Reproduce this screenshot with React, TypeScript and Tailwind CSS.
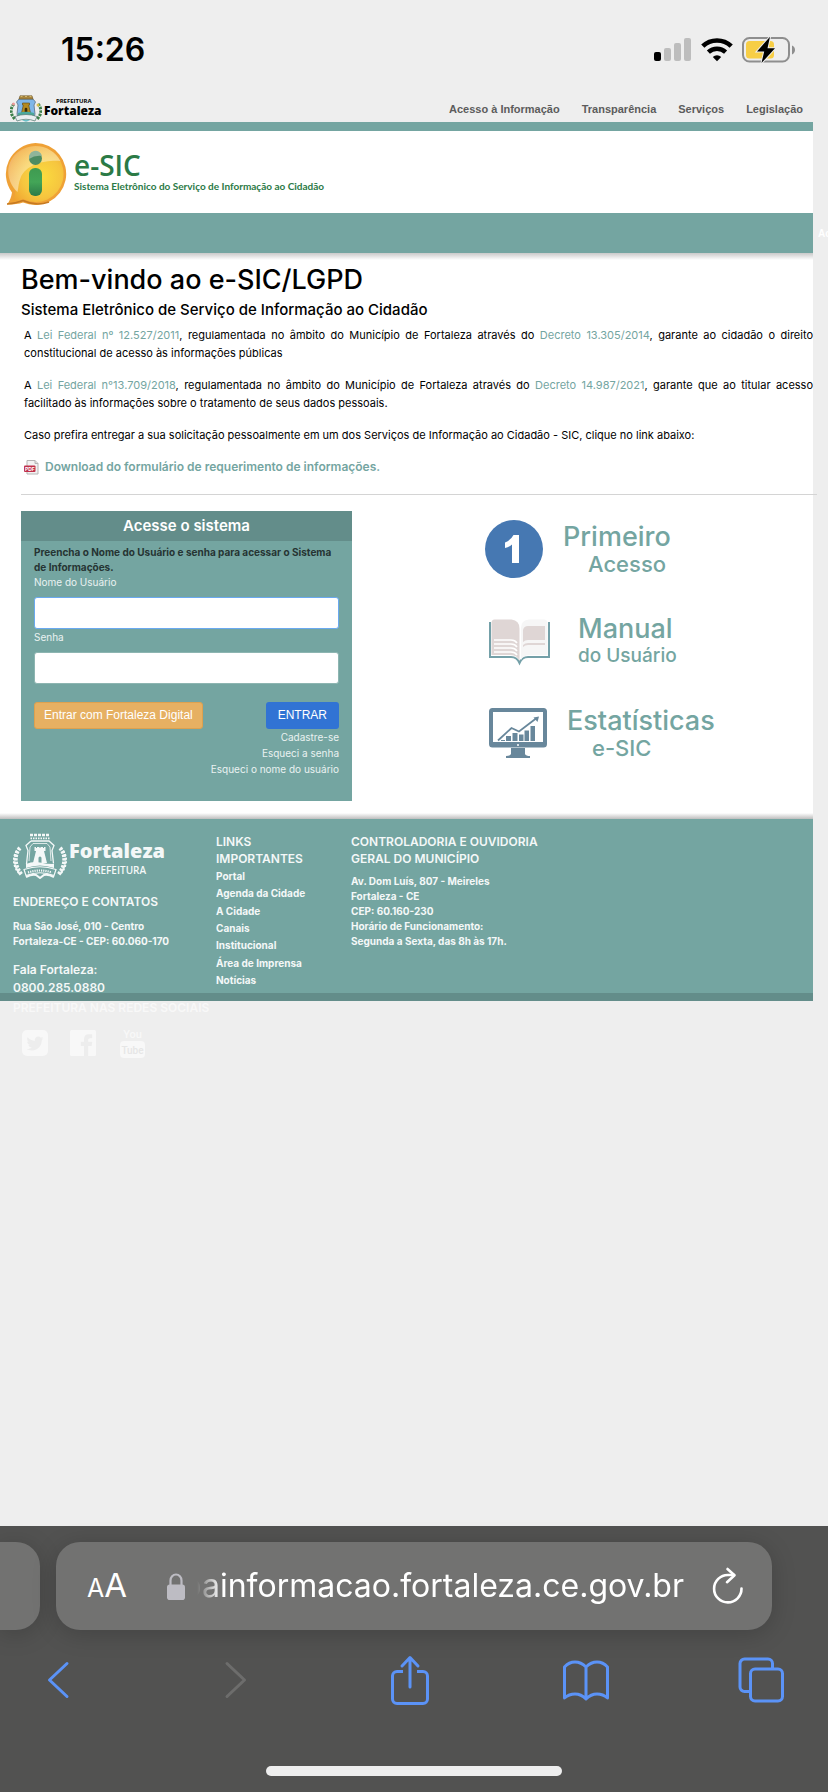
import type { ReactNode } from "react";
import { FaTwitter } from "react-icons/fa";

function StatusBar() {
  return (
    <div className="flex items-center justify-between pt-[30px] pr-8 pl-[61px]">
      <span className="text-[32px] leading-10 font-semibold text-black">15:26</span>
      <div className="flex items-center gap-[9px]">
        <svg width="38" height="24" viewBox="0 0 38 24" aria-label="Sinal">
          <rect x="0" y="14" width="7" height="9" rx="2" fill="#000" />
          <rect x="10" y="10" width="7" height="13" rx="2" fill="#bdbdbd" />
          <rect x="20" y="5" width="7" height="18" rx="2" fill="#bdbdbd" />
          <rect x="30" y="0" width="7" height="23" rx="2" fill="#bdbdbd" />
        </svg>
        <svg width="32" height="24" viewBox="0 0 32 24" fill="none" stroke="#000" aria-label="Wi-Fi">
          <path d="M1.8 8.2a20.4 20.4 0 0 1 28.4 0" strokeWidth="4.6" />
          <path d="M7.4 14.2a12.4 12.4 0 0 1 17.2 0" strokeWidth="4.4" />
          <path d="M16 23.2l-4.2-4.3a6 6 0 0 1 8.4 0z" fill="#000" stroke="none" />
        </svg>
        <svg width="54" height="28" viewBox="0 0 54 28" aria-label="Bateria">
          <rect x="1" y="2" width="46" height="23.5" rx="6.5" fill="none" stroke="#8e8e8e" strokeWidth="2" />
          <path d="M50 9.5c4 1.6 4 7.2 0 9z" fill="#8e8e8e" />
          <rect x="4" y="5" width="28" height="17.5" rx="3.5" fill="#f7ce46" />
          <path d="M28 0.8L15 15.4h7.2L19.5 27 33 12.2h-7.5z" fill="#000" stroke="#eee" strokeWidth="2" paintOrder="stroke" />
        </svg>
      </div>
    </div>
  );
}

function CrestColor() {
  return (
    <svg width="32" height="27" viewBox="0 0 32 27" aria-hidden="true">
      <path d="M4 9C0 13 0 20 5.500 24.500M28 9C32 13 32 20 26.500 24.500" fill="none" stroke="#3c7f4a" strokeWidth="3" strokeDasharray="2.500 1" />
      <circle cx="3.500" cy="9" r="1.500" fill="#ee9a9a" />
      <circle cx="28" cy="10" r="1.500" fill="#d9c24a" />
      <path d="M9 4h14l2.500 3-1.500 3 1 9-1 3H8l-1-3 1-9-1.500-3z" fill="#7fb7e8" stroke="#5b6f80" strokeWidth="0.800" />
      <path d="M10 0.800h12l1 3.200H9z" fill="#a8873f" stroke="#6b5324" strokeWidth="0.600" />
      <path d="M10.500 1.500h2M15 1.500h2M19.500 1.500h2" stroke="#e0c77c" strokeWidth="0.800" />
      <path d="M12.500 8h7v2h-.8l1.800 8h-9l1.800-8h-.8z" fill="#b58a1e" stroke="#5a4310" strokeWidth="0.600" />
      <path d="M14.700 18v-4a1.300 1.300 0 0 1 2.600 0v4z" fill="#3b2b08" />
      <path d="M8 18q8-2.500 16 0v4H8z" fill="#4aa89b" />
      <path d="M5 21.500q11-4 22 0l-2 4.500q-9-3.500-18 0z" fill="#e9eef0" stroke="#51776f" strokeWidth="0.700" />
      <path d="M12 25.500q4-1.500 8 0l-4 1.300z" fill="#6cc1c8" />
    </svg>
  );
}

function CrestWhite() {
  return (
    <svg width="54" height="46" viewBox="0 0 54 46" fill="none" stroke="#f4f8f8" aria-hidden="true">
      <path d="M7 15C1 21 1 33 9 42M47 15c6 6 6 18-2 27" strokeWidth="4" strokeDasharray="2.600 1.100" />
      <path d="M4 18C-1 25 1 35 7 41M50 18c5 7 3 17-3 23" strokeWidth="2.500" strokeDasharray="2 1.600" />
      <path d="M17 2h20" strokeWidth="2.600" strokeDasharray="3 1" />
      <path d="M17.500 5.300h19" strokeWidth="1.800" strokeDasharray="1.500 1" />
      <path d="M18 8h18l5 4.500-2 5 1.500 13M18 8l-5 4.500 2 5L13.500 31" strokeWidth="1.300" />
      <path d="M20 10.500h14l3 3.500 1 14M20 10.500L17 14l-1 14" strokeWidth="0.800" />
      <path d="M21.500 14h11v4H31l3 12H20l3-12h-1.500z" fill="#f4f8f8" stroke="none" />
      <path d="M25.500 30v-5a1.500 1.500 0 0 1 3 0v5z" fill="#74a5a1" stroke="none" />
      <path d="M23.500 13.500v1.500M27 13.500v1.500M30.500 13.500v1.500" stroke="#74a5a1" strokeWidth="1" />
      <path d="M13 31q7-3 14-1.500T41 31v4q-14-5-28 0z" fill="#f4f8f8" stroke="none" />
      <path d="M11 36.500q16-5.500 32 0l-2 6q-14-5.500-28 0z" strokeWidth="1.200" />
      <path d="M15 39.500q12-4 24 0" strokeWidth="2.200" strokeDasharray="1.200 1" />
      <path d="M13 44q6-3 10-2l4 3 4-3q4-1 10 2" strokeWidth="2" />
    </svg>
  );
}

const topLinks = ["Acesso à Informação", "Transparência", "Serviços", "Legislação"];

function TopHeader() {
  return (
    <header className="flex h-[52px] items-end justify-between pr-[10px] pl-[10px]">
      <a href="#inicio" className="flex items-end gap-[2px] text-black">
        <CrestColor />
        <span className="flex flex-col items-center pb-[5px] font-['Open_Sans',sans-serif]">
          <span className="pl-[2px] text-[6px] leading-[6px] font-bold">PREFEITURA</span>
          <span className="text-[12px] leading-[13px] font-extrabold">Fortaleza</span>
        </span>
      </a>
      <nav className="flex gap-[22px] pb-[5px] font-['Liberation_Sans',Arial,sans-serif] text-[11px] leading-4 font-bold text-[#5c5c5c]">
        {topLinks.map((label) => (
          <a key={label} href="#menu">{label}</a>
        ))}
      </nav>
    </header>
  );
}

function BrandBanner() {
  return (
    <div className="flex h-[82px] items-center gap-[6px] bg-white pl-[3px]">
      <svg width="65" height="66" viewBox="0 0 65 66" className="mt-[6px]" aria-hidden="true">
        <defs>
          <radialGradient id="bubble" cx="0.6" cy="0.55" r="0.65">
            <stop offset="0" stopColor="#fbdc3e" />
            <stop offset="0.550" stopColor="#f6c63f" />
            <stop offset="1" stopColor="#f0a22f" />
          </radialGradient>
          <linearGradient id="gloss" x1="0" y1="0" x2="0.7" y2="1">
            <stop offset="0" stopColor="#fff" stopOpacity="0.150" />
            <stop offset="1" stopColor="#fff" stopOpacity="0.550" />
          </linearGradient>
          <linearGradient id="stem" x1="0" y1="0" x2="0" y2="1">
            <stop offset="0" stopColor="#3f9a50" />
            <stop offset="0.500" stopColor="#43a557" />
            <stop offset="1" stopColor="#2c7a48" />
          </linearGradient>
        </defs>
        <path d="M32.500 1A31 31 0 1 1 20 60.500q-6 2-16 2 4-5 5-12A31 31 0 0 1 32.500 1z" fill="#efa136" />
        <path d="M4 62q8-.5 16-3.500 13 6 26 1.500" fill="none" stroke="#c67a22" strokeWidth="1.500" />
        <path d="M32.500 4A28 28 0 1 1 20 57q-4 2-11 3 3-5 3.500-10.500A28 28 0 0 1 32.500 4z" fill="url(#bubble)" />
        <path d="M32.500 4c11 0 20 6 25 15-16-1-34 3-40 17-2 5-2 9-3 14C-4 32 7 5 32.500 4z" fill="url(#gloss)" />
        <circle cx="32.500" cy="16.500" r="6.500" fill="#4c8c62" />
        <path d="M26 17q6-4 13-3a6.500 6.500 0 0 0-13 3z" fill="#8fb59a" />
        <rect x="26" y="26" width="13" height="28" rx="6" fill="url(#stem)" />
      </svg>
      <div className="text-[#2b7a46]">
        <div className="font-['Open_Sans',sans-serif] text-[28px] leading-7 font-semibold">e-SIC</div>
        <div className="font-[Lato,sans-serif] text-[10px] leading-[15px] font-bold">Sistema Eletrônico do Serviço de Informação ao Cidadão</div>
      </div>
    </div>
  );
}

function A({ children }: { children: ReactNode }) {
  return <a href="#legislacao" className="text-[#74a5a1]">{children}</a>;
}

function Intro() {
  return (
    <section className="pt-[11px] pl-[21px]">
      <h1 className="text-[27px] leading-8 font-medium text-black">Bem-vindo ao e-SIC/LGPD</h1>
      <h2 className="mt-1 text-[15px] leading-5 font-medium text-black">Sistema Eletrônico de Serviço de Informação ao Cidadão</h2>
      <div className="mt-[6px] flex flex-col gap-[14px] pl-[3px] text-[11px] leading-[18px] text-black">
        <p className="text-justify">
          A <A>Lei Federal nº 12.527/2011</A>, regulamentada no âmbito do Município de Fortaleza através do <A>Decreto 13.305/2014</A>, garante ao cidadão o direito constitucional de acesso às informações públicas
        </p>
        <p className="text-justify">
          A <A>Lei Federal n°13.709/2018</A>, regulamentada no âmbito do Município de Fortaleza através do <A>Decreto 14.987/2021</A>, garante que ao titular acesso facilitado às informações sobre o tratamento de seus dados pessoais.
        </p>
        <p>Caso prefira entregar a sua solicitação pessoalmente em um dos Serviços de Informação ao Cidadão - SIC, clique no link abaixo:</p>
        <a href="#formulario" className="flex items-center gap-[6px] text-[12px] font-semibold text-[#74a5a1]">
          <svg width="15" height="15" viewBox="0 0 15 15" aria-hidden="true">
            <path d="M3 .5h8l3 3V14H3z" fill="#f2f2f2" stroke="#b5b5b5" />
            <path d="M11 .5v3h3" fill="#ddd" stroke="#b5b5b5" />
            <rect x="0" y="5.500" width="11.500" height="6.500" rx="1" fill="#c0304a" />
            <text x="1" y="11" fontSize="5" fontWeight="700" fill="#fff">PDF</text>
          </svg>
          Download do formulário de requerimento de informações.
        </a>
      </div>
      <hr className="mt-[18px] -mr-1 border-[#d4d4d4]" />
    </section>
  );
}

function LoginCard() {
  return (
    <form className="w-[331px] shrink-0 bg-[#74a5a1] pb-6" onSubmit={(e) => e.preventDefault()}>
      <h3 className="bg-[#638d8a] text-center text-[15px] leading-[30px] font-semibold text-white">Acesse o sistema</h3>
      <div className="px-[13px] pt-1 text-[10px] leading-[15px] text-[#eaf2f1]">
        <p className="font-bold text-[#263433]">Preencha o Nome do Usuário e senha para acessar o Sistema de Informações.</p>
        <label htmlFor="usuario" className="block">Nome do Usuário</label>
        <input id="usuario" type="text" className="mt-[7px] block h-8 w-full rounded-[3px] border border-[#6aa9f0] bg-white px-2 text-black outline-none" />
        <label htmlFor="senha" className="mt-px block">Senha</label>
        <input id="senha" type="password" className="mt-[7px] block h-8 w-full rounded-[3px] border border-[#8db5b1] bg-white px-2 text-black outline-none" />
        <div className="mt-[18px] flex justify-between font-['Liberation_Sans',Arial,sans-serif] text-[12px] text-white">
          <button type="button" className="h-[27px] rounded-[3px] border border-[#dda14f] bg-[#e6b062] px-[9px]">Entrar com Fortaleza Digital</button>
          <button type="submit" className="h-[27px] rounded-[3px] bg-[#3173d4] px-3">ENTRAR</button>
        </div>
        <div className="flex flex-col items-end leading-4">
          <a href="#cadastro">Cadastre-se</a>
          <a href="#senha">Esqueci a senha</a>
          <a href="#usuario">Esqueci o nome do usuário</a>
        </div>
      </div>
    </form>
  );
}

function FirstIcon() {
  return (
    <svg width="66" height="58" viewBox="0 0 66 58" aria-hidden="true">
      <circle cx="29" cy="29" r="29" fill="#4678b2" />
      <path d="M27 43V24.500q-3 2.500-7 3.500v-5.500q6-2.500 8.500-7.500h5.500v28z" fill="#fff" />
    </svg>
  );
}

function BookIcon() {
  return (
    <svg width="66" height="58" viewBox="0 0 66 58" aria-hidden="true">
      <path d="M5 10v35h21q6 0 8.500 6Q37 45 43 45h21V10" fill="none" stroke="#74a0a8" strokeWidth="2" />
      <path d="M6.500 11q0-3.500 3-3.500h17q8 1 8 9V49q-2-6-9-6h-19z" fill="#dfd6d5" />
      <path d="M36 16q0-8 8-8.500h15q3.500 0 3.500 3.500v32H45q-7 0-9 5z" fill="#f6f6f6" />
      <path d="M38 28V18q1-4 5-4h17v14H43q-3 0-5 2zM38 33q2-2 5-2h17v2H43q-3 0-5 2z" fill="#dfd6d5" />
      <g fill="none" stroke="#fff" strokeWidth="1.500">
        <path d="M9 28h17q4 0 6 3M9 32h17q4 0 6 3M9 36h17q4 0 6 3M9 40h17q4 0 6 3" />
      </g>
    </svg>
  );
}

function ChartIcon() {
  return (
    <svg width="66" height="58" viewBox="0 0 66 58" fill="#68879b" aria-hidden="true">
      <rect x="6" y="6" width="54" height="35.500" rx="1.500" fill="#fff" stroke="#68879b" strokeWidth="4" />
      <rect x="5" y="38" width="56" height="4.500" />
      <circle cx="33" cy="41" r="1" fill="#fff" />
      <path d="M26 44h14v6q1 2 5 2v2H21v-2q4 0 5-2z" />
      <path d="M16 36h4v1h-4zM21 32h5v5h-5zM27.500 29h5v8h-5zM34 30.500h4.500V37H34zM39.500 26.500H44V37h-4.500zM45.500 22H50v15h-4.500z" />
      <path d="M13 36.500L26.500 24l7.500 3.500L51 14.500" fill="none" stroke="#68879b" strokeWidth="1.800" />
      <path d="M54 12.500l-1.500 5.500-4-4.500z" />
    </svg>
  );
}

const shortcuts = [
  { title: "Primeiro", sub: "Acesso", icon: <FirstIcon />, text: "pl-[12px]", subClass: "pl-[25px] text-[22px]" },
  { title: "Manual", sub: "do Usuário", icon: <BookIcon />, text: "pl-[27px]", subClass: "text-[19px]" },
  { title: "Estatísticas", sub: "e-SIC", icon: <ChartIcon />, text: "pl-4", subClass: "pl-[25px] text-[22px]" },
];

function Shortcuts() {
  return (
    <nav className="ml-[133px] flex flex-col gap-[38px] pt-[11px] text-[#74a5a1]">
      {shortcuts.map((s) => (
        <a key={s.title} href="#atalho" className="flex h-[54px] items-center">
          {s.icon}
          <span className={`flex flex-col pt-[2px] ${s.text}`}>
            <span className="text-[27px] leading-7 font-medium">{s.title}</span>
            <span className={`leading-[26px] font-medium ${s.subClass}`}>{s.sub}</span>
          </span>
        </a>
      ))}
    </nav>
  );
}

function SocialLinks() {
  return (
    <div className="mt-[11px] flex items-center pl-[9px] text-[#f8f8f8]">
      <a href="#twitter" aria-label="Twitter">
        <svg width="26" height="32" viewBox="0 0 26 32">
          <rect x="0" y="3" width="26" height="26" rx="5" fill="currentColor" />
          <FaTwitter x="4.500" y="8" size={17} color="#ededed" />
        </svg>
      </a>
      <a href="#facebook" aria-label="Facebook" className="ml-[22px]">
        <svg width="26" height="32" viewBox="0 0 26 32">
          <rect x="0" y="3" width="26" height="26" rx="1.500" fill="currentColor" />
          <path d="M14 29V19h-3.200v-4.200H14V12q0-4.800 4.800-4.800h3.400v4h-2.400q-1.600 0-1.600 1.600v2h4l-.5 4.200h-3.500v10z" fill="#ededed" />
        </svg>
      </a>
      <a href="#youtube" aria-label="YouTube" className="ml-6">
        <svg width="26" height="32" viewBox="0 0 26 32" fontFamily="Roboto, sans-serif" fontWeight="500" textAnchor="middle">
          <text x="12.500" y="11" fontSize="11" fill="currentColor">You</text>
          <rect x="0" y="14" width="25" height="17" rx="4" fill="currentColor" />
          <text x="12.500" y="26.500" fontSize="10" fill="#e6e6e6">Tube</text>
        </svg>
      </a>
    </div>
  );
}

const footerLinks = ["Portal", "Agenda da Cidade", "A Cidade", "Canais", "Institucional", "Área de Imprensa", "Notícias"];

function Footer() {
  return (
    <footer className="h-[182px] border-b-8 border-[#638d8a] bg-[#74a5a1] pt-[14px] pl-[13px] text-[10px] leading-[15px] font-bold text-[#f4f8f8]">
      <div className="flex">
        <div className="w-[203px]">
          <a href="#fortaleza" className="flex h-[46px] items-center gap-[2px] font-['Open_Sans',sans-serif]">
            <CrestWhite />
            <span className="flex flex-col items-center pt-[5px]">
              <span className="text-[20px] leading-5 font-extrabold">Fortaleza</span>
              <span className="pt-[3px] text-[10px] leading-3 font-semibold">PREFEITURA</span>
            </span>
          </a>
          <h4 className="mt-[14px] text-[12px] leading-[17px] font-semibold">ENDEREÇO E CONTATOS</h4>
          <p className="mt-[9px]">Rua São José, 010 - Centro<br />Fortaleza-CE - CEP: 60.060-170</p>
          <p className="mt-3 text-[12px] leading-[18px] font-semibold">Fala Fortaleza:<br />0800.285.0880</p>
          <h4 className="mt-[2px] text-[12px] leading-[17px] font-semibold whitespace-nowrap text-[#f8f8f8]">PREFEITURA NAS REDES SOCIAIS</h4>
          <SocialLinks />
        </div>
        <div className="w-[135px]">
          <h4 className="text-[12px] leading-[17px] font-semibold">LINKS<br />IMPORTANTES</h4>
          <ul className="mt-px flex h-[121px] flex-col justify-between leading-[17px]">
            {footerLinks.map((l) => (
              <li key={l}><a href="#link">{l}</a></li>
            ))}
          </ul>
        </div>
        <div>
          <h4 className="text-[12px] leading-[17px] font-semibold">CONTROLADORIA E OUVIDORIA<br />GERAL DO MUNICÍPIO</h4>
          <p className="mt-[7px]">
            Av. Dom Luís, 807 - Meireles<br />Fortaleza - CE<br />CEP: 60.160-230<br />Horário de Funcionamento:<br />Segunda a Sexta, das 8h às 17h.
          </p>
        </div>
      </div>
    </footer>
  );
}

function ToolButton({ label, className = "", children }: { label: string; className?: string; children: ReactNode }) {
  return (
    <button type="button" aria-label={label} className={`flex w-12 justify-center ${className}`}>
      {children}
    </button>
  );
}

function BrowserBar() {
  return (
    <div className="mt-auto bg-[#525251] pt-4 pb-4">
      <div className="flex gap-4">
        <div className="h-[88px] w-10 shrink-0 rounded-r-[24px] bg-[#727271] shadow-[0_4px_24px_rgba(0,0,0,0.18)]" />
        <div className="mr-14 flex h-[88px] min-w-0 flex-1 items-center rounded-[24px] bg-[#727271] pr-[28px] pl-[31px] text-white shadow-[0_4px_24px_rgba(0,0,0,0.18)]">
          <button type="button" aria-label="Tamanho do texto" className="flex items-baseline">
            <span className="text-[25px] leading-[44px]">A</span>
            <span className="text-[33px] leading-[44px]">A</span>
          </button>
          <svg width="18" height="27" viewBox="0 0 18 27" className="ml-10 shrink-0" aria-hidden="true">
            <path d="M3.500 13V7.500a5.500 6 0 0 1 11 0V13" fill="none" stroke="#bdbcc3" strokeWidth="2.200" />
            <rect x="0" y="11.500" width="18" height="15.500" rx="2.800" fill="#bdbcc3" />
          </svg>
          <button type="button" className="ml-3 flex min-w-0 flex-1 justify-end overflow-hidden [mask-image:linear-gradient(to_right,transparent,black_24px)] text-[32px] leading-[44px] whitespace-nowrap">
            oainformacao.fortaleza.ce.gov.br
          </button>
          <button type="button" aria-label="Recarregar" className="ml-[28px]">
            <svg width="32" height="38" viewBox="0 0 32 38" fill="none" stroke="#fff" strokeWidth="2.600" strokeLinecap="round" strokeLinejoin="round">
              <path d="M29.500 21.500A13.700 13.700 0 1 1 16 8h6" />
              <path d="M15.500 2l7 6.200-7.500 7" />
            </svg>
          </button>
        </div>
      </div>
      <div className="mt-6 flex h-[52px] items-center justify-between pr-[43px] pl-[35px] text-[#5b93f7]">
        <ToolButton label="Voltar">
          <svg width="24" height="40" viewBox="0 0 24 40" fill="none" stroke="currentColor" strokeWidth="3" strokeLinecap="round" strokeLinejoin="round"><path d="M20 3.500L2.500 20 20 36.500" /></svg>
        </ToolButton>
        <ToolButton label="Avançar" className="text-[#6d6d6c]">
          <svg width="24" height="40" viewBox="0 0 24 40" fill="none" stroke="currentColor" strokeWidth="3" strokeLinecap="round" strokeLinejoin="round"><path d="M4 3.500L21.500 20 4 36.500" /></svg>
        </ToolButton>
        <ToolButton label="Compartilhar">
          <svg width="40" height="52" viewBox="0 0 40 52" fill="none" stroke="currentColor" strokeWidth="3" strokeLinecap="round" strokeLinejoin="round">
            <path d="M13 17.500H7a4.500 4.500 0 0 0-4.500 4.500v23A4.500 4.500 0 0 0 7 49.500h26a4.500 4.500 0 0 0 4.500-4.500V22a4.500 4.500 0 0 0-4.500-4.500h-6" strokeLinecap="butt" />
            <path d="M20 33V4M12 12l8-8.500 8 8.500" />
          </svg>
        </ToolButton>
        <ToolButton label="Favoritos">
          <svg width="48" height="42" viewBox="0 0 48 42" fill="none" stroke="currentColor" strokeWidth="3" strokeLinejoin="round">
            <path d="M24 8Q19 3 13 3T2.500 8v31Q7 35 13 35t11 5q5-5 11-5t10.500 4V8Q41 3 35 3T24 8v32" />
          </svg>
        </ToolButton>
        <ToolButton label="Abas">
          <svg width="46" height="46" viewBox="0 0 46 46" fill="none" stroke="currentColor" strokeWidth="3">
            <rect x="12.500" y="12" width="32" height="32" rx="4.500" />
            <path d="M12.500 34.500H6.500A4.500 4.500 0 0 1 2 30V6.500A4.500 4.500 0 0 1 6.500 2h23.500A4.500 4.500 0 0 1 34.500 6.500V12" />
          </svg>
        </ToolButton>
      </div>
      <div className="mx-auto mt-[60px] h-[10px] w-[296px] rounded-full bg-[#eee]" />
    </div>
  );
}

export default function App() {
  return (
    <div className="flex min-h-screen flex-col overflow-x-hidden bg-[#eee] font-[Inter,'Noto_Sans',sans-serif]">
      <StatusBar />
      <div className="mr-[15px]">
        <TopHeader />
        <div className="h-[9px] bg-[#74a5a1]" />
        <BrandBanner />
        <div className="relative h-10 bg-[#74a5a1]">
          <a href="#acesso" className="absolute top-[13px] left-full ml-[5px] font-['Liberation_Sans',Arial,sans-serif] text-[10px] leading-4 font-bold text-white">Ac</a>
        </div>
        <main className="bg-white bg-[linear-gradient(to_bottom,#c9c9c9,#fff_7px,#fff_calc(100%-6px),#bdbdbd)] pb-[18px]">
          <Intro />
          <div className="mt-4 flex items-start pl-[21px]">
            <LoginCard />
            <Shortcuts />
          </div>
        </main>
        <Footer />
      </div>
      <BrowserBar />
    </div>
  );
}
